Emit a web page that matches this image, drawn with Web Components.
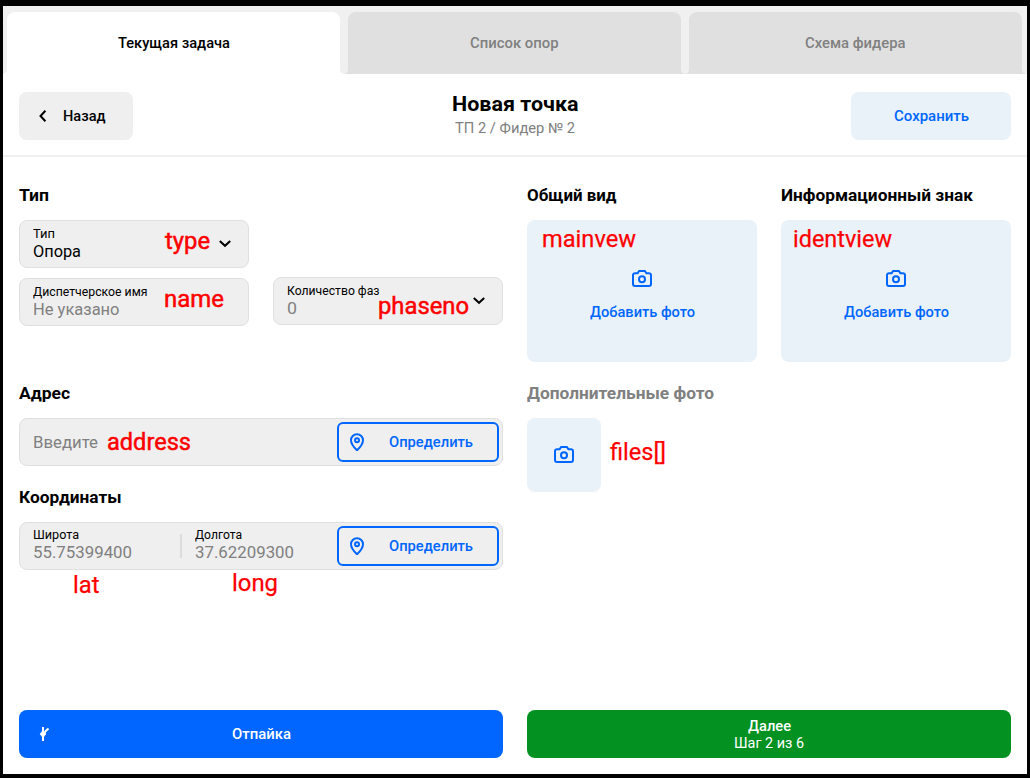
<!DOCTYPE html>
<html lang="ru">
<head>
<meta charset="utf-8">
<title>Новая точка</title>
<style>
html,body{margin:0;height:100%;background:#000}
body{font-family:Roboto,"Open Sans",sans-serif;font-size:14px;color:#000}
</style>
</head>
<body>
<point-page></point-page>
<script>
function define(name, html, Base = HTMLElement) {
  const t = document.createElement('template');
  t.innerHTML = html;
  customElements.define(name, class extends Base {
    constructor() {
      super();
      this.attachShadow({mode: 'open'}).append(t.content.cloneNode(true));
    }
  });
}

/* Text run whose letters are widened or narrowed to fill a given width. */
customElements.define('ui-text', class extends HTMLElement {
  constructor() {
    super();
    this.attachShadow({mode: 'open'}).innerHTML =
      '<style>:host{display:block;white-space:nowrap;width:max-content}span{display:inline-block;transform-origin:0 50%}</style><span><slot></slot></span>';
  }
  connectedCallback() {
    const w = parseFloat(this.getAttribute('w'));
    const span = this.shadowRoot.querySelector('span');
    if (!w) return;
    span.style.transform = `scaleX(${w / span.getBoundingClientRect().width})`;
    this.style.width = w + 'px';
  }
});

const icons = {
  back: [8, 12, '<path d="M6.400 .7 1.500 6l4.900 5.300"/>'],
  down: [12, 8, '<path d="m.8 1 5.200 4.800L11.200 1"/>'],
  camera: [20, 18, '<path d="M3 3.200h2.600L7.200 1h5.600l1.600 2.200H17a2 2 0 0 1 2 2V14a2 2 0 0 1-2 2H3a2 2 0 0 1-2-2V5.200a2 2 0 0 1 2-2Z"/><circle cx="10" cy="9.200" r="3"/>'],
  pin: [14, 18, '<path d="M7 17.200C5.300 15.600 1 11.600 1 7.200a6 6 0 0 1 12 0c0 4.400-4.300 8.400-6 10Z"/><circle cx="7" cy="7.200" r="2"/>'],
  tap: [10, 14, '<path d="M4 0v14M4.500 7.500 6.800 4 9.500 1.500"/><path d="M4 3.500 7 7 4 10.500 1 7Z" fill="currentColor" stroke-width=".6"/>']
};
customElements.define('ui-icon', class extends HTMLElement {
  constructor() {
    super();
    const [w, h, d] = icons[this.getAttribute('name')];
    this.attachShadow({mode: 'open'}).innerHTML =
      `<style>:host{display:block;flex:none;width:${w}px;height:${h}px}svg{display:block}</style>
       <svg width="${w}" height="${h}" viewBox="0 0 ${w} ${h}" fill="none" stroke="currentColor" stroke-width="2">${d}</svg>`;
  }
});

define('nav-tab', `
<style>
:host{--c:#e0e0e0;display:flex;position:relative;width:333px;height:62px;box-sizing:border-box;align-items:center;justify-content:center;
background:var(--c);border-radius:8px 8px 0 0;color:#808080;font-weight:500}
:host([active]){--c:#fff;color:#000}
:host::before,:host::after{content:"";position:absolute;bottom:0;width:4px;height:4px}
:host::before{left:-4px;background:radial-gradient(circle at 0 0,transparent 3.500px,var(--c) 4px)}
:host::after{right:-4px;background:radial-gradient(circle at 100% 0,transparent 3.500px,var(--c) 4px)}
</style><slot></slot>`);

define('ui-button', `
<style>
:host{display:flex;box-sizing:border-box;height:48px;border-radius:8px;align-items:center;justify-content:center;font-weight:500;position:relative}
:host([kind=back]){width:114px;background:#efefef;justify-content:flex-start;padding-left:20px;gap:16px}
:host([kind=save]){width:160px;background:#e9f2f9;color:#06f}
:host([kind=primary]){background:#06f;color:#fff}
:host([kind=next]){background:#039222;color:#fff;flex-direction:column;padding-top:2px}
:host([kind=locate]){width:162px;height:40px;border:2px solid #06f;border-radius:6px;color:#06f;justify-content:flex-start;padding-left:11px;gap:25px}
::slotted([slot=lead]){position:absolute;left:20px;top:17px}
</style><slot name="lead"></slot><slot></slot>`);

define('ui-field', `
<style>
:host{display:flex;box-sizing:border-box;height:48px;border:1px solid #e0e0e0;border-radius:8px;background:#efefef;align-items:center;justify-content:space-between;padding:0 3px 0 13px}
:host([select]){padding-right:17px}
</style><slot></slot><slot name="end"></slot>`);

define('field-value', `
<style>
:host{display:block;height:36px;font-size:16px;line-height:20px;color:#808080}
:host([filled]){color:#000}
.l{font-size:12px;line-height:14px;color:#000;height:15px}
</style><div class="l"><slot name="label"></slot></div><slot></slot>`);

define('section-title', `
<style>
:host{display:block;height:34px;font-size:16px;line-height:20px;font-weight:700}
:host([muted]){color:#808080}
</style><slot></slot>`);

define('photo-drop', `
<style>
:host{display:flex;box-sizing:border-box;width:230px;height:142px;border-radius:8px;background:#e9f2f9;color:#06f;font-weight:500;flex-direction:column;align-items:center;padding-top:50px;gap:16px;line-height:17px}
:host([small]){width:74px;height:74px;padding-top:28px}
</style><ui-icon name="camera"></ui-icon><slot></slot>`);

/* Red developer note laid over the form. */
customElements.define('api-note', class extends HTMLElement {
  constructor() {
    super();
    const a = k => this.getAttribute(k);
    this.attachShadow({mode: 'open'}).innerHTML =
      `<style>:host{position:absolute;left:${a('x')}px;top:${a('base') - 22}px;font:24px/28px Roboto,sans-serif;color:#f00;-webkit-text-stroke:${a('stroke') || .25}px #f00}</style><slot></slot>`;
  }
});

define('point-page', `
<style>
:host{display:block;position:relative;width:1030px;height:778px;box-sizing:border-box;border:solid #000;border-width:6px 3px 4px;background:#fff;overflow:hidden}
nav{display:flex;gap:8px;height:68px;box-sizing:border-box;padding:6px 4px 0;background:#f0f0f0}
header{display:grid;grid-template-columns:160px 1fr 160px;height:83px;box-sizing:border-box;padding:18px 16px 0;border-bottom:2px solid #f0f0f0}
.title{display:flex;flex-direction:column;align-items:center}
.title .h{font-size:20px;line-height:24px;font-weight:700}
.title .s{line-height:16px;color:#808080;margin-top:4px}
main{display:grid;grid-template-columns:484px 484px;gap:24px;padding:29px 16px 0;height:553px;box-sizing:border-box}
.first{height:198px}
.addr{height:104px}
.pair{display:grid;grid-template-columns:230px 230px;column-gap:24px;row-gap:10px}
.pair field-value{padding-top:2px}
.phase{grid-row:2;grid-column:2;margin-top:-1px;margin-bottom:1px}
.coords{display:flex;align-items:center}
.coords field-value{width:147px}
.coords i{width:2px;height:24px;background:#dcdcdc;margin-right:13px}
.coords field-value:last-child{width:120px}
footer{display:grid;grid-template-columns:484px 484px;gap:24px;padding:0 16px}
.step{font-weight:400}
.next{line-height:17px}
.notes{position:absolute;left:-3px;top:-6px}
</style>
<nav>
 <nav-tab active><ui-text w="112">Текущая задача</ui-text></nav-tab>
 <nav-tab><ui-text w="88.500">Список опор</ui-text></nav-tab>
 <nav-tab><ui-text w="100.500">Схема фидера</ui-text></nav-tab>
</nav>
<header>
 <ui-button kind="back"><ui-icon name="back"></ui-icon><ui-text w="42.500">Назад</ui-text></ui-button>
 <div class="title"><ui-text class="h" w="126.500">Новая точка</ui-text><ui-text class="s" w="120">ТП 2 / Фидер № 2</ui-text></div>
 <ui-button kind="save"><ui-text w="75">Сохранить</ui-text></ui-button>
</header>
<main>
 <div>
  <section class="first">
   <section-title><ui-text w="30">Тип</ui-text></section-title>
   <div class="pair">
    <ui-field select><field-value filled><ui-text slot="label" w="22">Тип</ui-text><ui-text w="48">Опора</ui-text></field-value><ui-icon slot="end" name="down"></ui-icon></ui-field>
    <ui-field style="grid-row:2"><field-value><ui-text slot="label" w="114.500">Диспетчерское имя</ui-text><ui-text w="86.500">Не указано</ui-text></field-value></ui-field>
    <ui-field select class="phase"><field-value><ui-text slot="label" w="92.500">Количество фаз</ui-text><ui-text w="10">0</ui-text></field-value><ui-icon slot="end" name="down"></ui-icon></ui-field>
   </div>
  </section>
  <section class="addr">
   <section-title><ui-text w="51">Адрес</ui-text></section-title>
   <ui-field><ui-text style="font-size:16px;color:#808080" w="65">Введите</ui-text><ui-button slot="end" kind="locate"><ui-icon name="pin"></ui-icon><ui-text w="84">Определить</ui-text></ui-button></ui-field>
  </section>
  <section>
   <section-title><ui-text w="102.500">Координаты</ui-text></section-title>
   <ui-field><div class="coords"><field-value><ui-text slot="label" w="46">Широта</ui-text><ui-text w="99">55.75399400</ui-text></field-value><i></i><field-value><ui-text slot="label" w="47">Долгота</ui-text><ui-text w="99">37.62209300</ui-text></field-value></div><ui-button slot="end" kind="locate"><ui-icon name="pin"></ui-icon><ui-text w="84">Определить</ui-text></ui-button></ui-field>
  </section>
 </div>
 <div>
  <section class="first pair">
   <div><section-title><ui-text w="89.500">Общий вид</ui-text></section-title><photo-drop><ui-text w="105">Добавить фото</ui-text></photo-drop></div>
   <div><section-title><ui-text w="192">Информационный знак</ui-text></section-title><photo-drop><ui-text w="105">Добавить фото</ui-text></photo-drop></div>
  </section>
  <section>
   <section-title muted><ui-text w="187">Дополнительные фото</ui-text></section-title>
   <photo-drop small></photo-drop>
  </section>
 </div>
</main>
<footer>
 <ui-button kind="primary"><ui-icon slot="lead" name="tap"></ui-icon><ui-text w="59">Отпайка</ui-text></ui-button>
 <ui-button kind="next" class="next"><ui-text w="43">Далее</ui-text><ui-text class="step" w="70">Шаг 2 из 6</ui-text></ui-button>
</footer>
<div class="notes">
 <api-note x="165" base="249" stroke="0.5"><ui-text w="45">type</ui-text></api-note>
 <api-note x="163.500" base="307" stroke="0.5"><ui-text w="60">name</ui-text></api-note>
 <api-note x="377.500" base="314" stroke="0.5"><ui-text w="91">phaseno</ui-text></api-note>
 <api-note x="541.500" base="247"><ui-text w="94">mainvew</ui-text></api-note>
 <api-note x="792.500" base="247"><ui-text w="99">identview</ui-text></api-note>
 <api-note x="107" base="450" stroke="0.5"><ui-text w="84">address</ui-text></api-note>
 <api-note x="72.500" base="593"><ui-text w="26.500">lat</ui-text></api-note>
 <api-note x="231.500" base="591"><ui-text w="46">long</ui-text></api-note>
 <api-note x="610" base="460"><ui-text w="56">files[]</ui-text></api-note>
</div>`);
</script>
</body>
</html>
